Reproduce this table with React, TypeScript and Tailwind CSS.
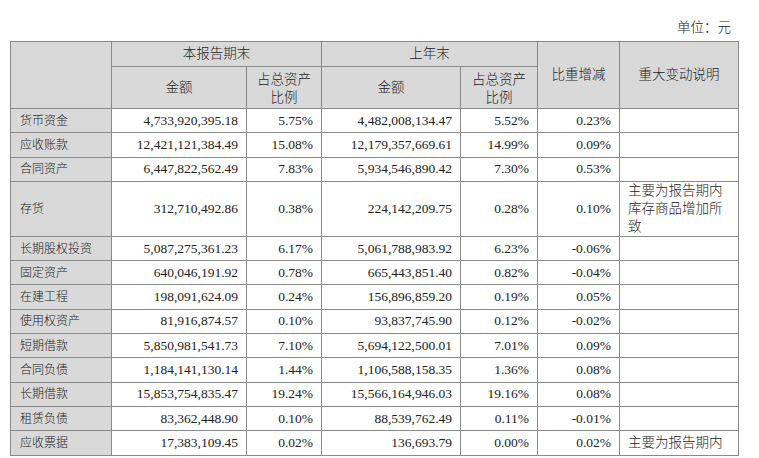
const rows: [string, string, string, string, string, string, string[]][] = [
  ["货币资金", "4,733,920,395.18", "5.75%", "4,482,008,134.47", "5.52%", "0.23%", []],
  ["应收账款", "12,421,121,384.49", "15.08%", "12,179,357,669.61", "14.99%", "0.09%", []],
  ["合同资产", "6,447,822,562.49", "7.83%", "5,934,546,890.42", "7.30%", "0.53%", []],
  ["存货", "312,710,492.86", "0.38%", "224,142,209.75", "0.28%", "0.10%", ["主要为报告期内", "库存商品增加所", "致"]],
  ["长期股权投资", "5,087,275,361.23", "6.17%", "5,061,788,983.92", "6.23%", "-0.06%", []],
  ["固定资产", "640,046,191.92", "0.78%", "665,443,851.40", "0.82%", "-0.04%", []],
  ["在建工程", "198,091,624.09", "0.24%", "156,896,859.20", "0.19%", "0.05%", []],
  ["使用权资产", "81,916,874.57", "0.10%", "93,837,745.90", "0.12%", "-0.02%", []],
  ["短期借款", "5,850,981,541.73", "7.10%", "5,694,122,500.01", "7.01%", "0.09%", []],
  ["合同负债", "1,184,141,130.14", "1.44%", "1,106,588,158.35", "1.36%", "0.08%", []],
  ["长期借款", "15,853,754,835.47", "19.24%", "15,566,164,946.03", "19.16%", "0.08%", []],
  ["租赁负债", "83,362,448.90", "0.10%", "88,539,762.49", "0.11%", "-0.01%", []],
  ["应收票据", "17,383,109.45", "0.02%", "136,693.79", "0.00%", "0.02%", ["主要为报告期内"]],
]

const cell = "border border-[#8a8a8a] px-0 py-0"
const head = `${cell} bg-[#d9d9d9] text-center align-middle`
const num = `${cell} text-right pr-[8px] align-middle`

export default function App() {
  return (
    <div
      className="w-[759px] min-h-[458px] bg-white text-[#222] text-[13.5px] leading-[18px]"
      style={{ fontFamily: '"Liberation Serif", "Noto Sans CJK SC", serif' }}
    >
      <div className="h-[41px] flex items-end justify-end pr-[28px] pb-[4px] font-light">单位：元</div>
      <table className="ml-[10px] w-[728px] table-fixed border-collapse">
        <colgroup>
          <col className="w-[101px]" />
          <col className="w-[135px]" />
          <col className="w-[75px]" />
          <col className="w-[139px]" />
          <col className="w-[77px]" />
          <col className="w-[82px]" />
          <col className="w-[119px]" />
        </colgroup>
        <thead>
          <tr className="h-[25px]">
            <th rowSpan={2} className={head}></th>
            <th colSpan={2} className={`${head} font-light`}>本报告期末</th>
            <th colSpan={2} className={`${head} font-light`}>上年末</th>
            <th rowSpan={2} className={`${head} font-light`}>比重增减</th>
            <th rowSpan={2} className={`${head} font-light`}>重大变动说明</th>
          </tr>
          <tr className="h-[42px]">
            <th className={`${head} font-light`}>金额</th>
            <th className={`${head} font-light pt-[2px]`}>
              占总资产
              <br />
              比例
            </th>
            <th className={`${head} font-light`}>金额</th>
            <th className={`${head} font-light pt-[2px]`}>
              占总资产
              <br />
              比例
            </th>
          </tr>
        </thead>
        <tbody>
          {rows.map((r) => (
            <tr key={r[0]} className={r[6].length > 1 ? "h-[53.3px]" : "h-[24.3px]"}>
              <td className={`${cell} bg-[#d9d9d9] pl-[9px] text-[12px] font-light align-middle`}>{r[0]}</td>
              <td className={num}>{r[1]}</td>
              <td className={num}>{r[2]}</td>
              <td className={num}>{r[3]}</td>
              <td className={num}>{r[4]}</td>
              <td className={num}>{r[5]}</td>
              <td className={`${cell} pl-[8px] font-light align-middle`}>
                {r[6].map((line, i) => (
                  <div key={i}>{line}</div>
                ))}
              </td>
            </tr>
          ))}
        </tbody>
      </table>
    </div>
  )
}
